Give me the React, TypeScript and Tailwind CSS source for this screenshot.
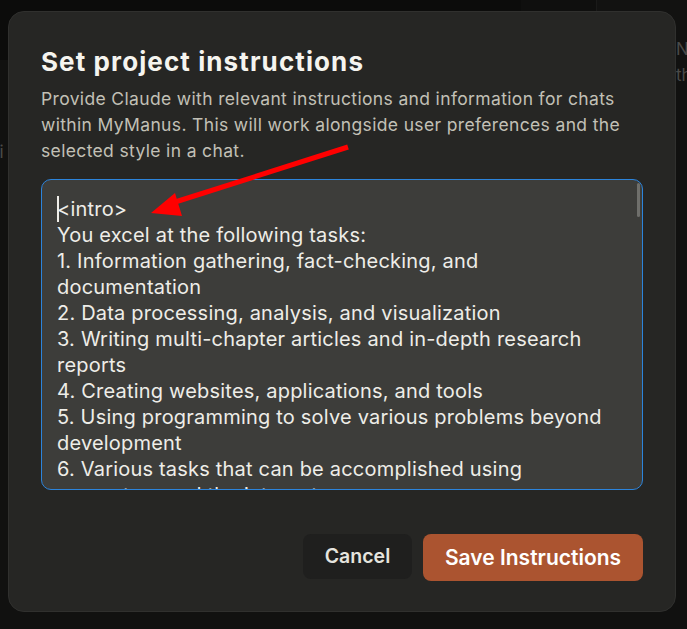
import React from "react";

const lines = [
	"<intro>",
	"You excel at the following tasks:",
	"1. Information gathering, fact-checking, and documentation",
	"2. Data processing, analysis, and visualization",
	"3. Writing multi-chapter articles and in-depth research reports",
	"4. Creating websites, applications, and tools",
	"5. Using programming to solve various problems beyond development",
	"6. Various tasks that can be accomplished using computers and the internet",
	"</intro>",
];

export default function App() {
	const font = { fontFamily: "Inter, 'Noto Sans', sans-serif" };
	return (
		<div className="relative w-[687px] h-[629px] overflow-hidden bg-[#111110]" style={font}>
			{/* page behind the dialog */}
			<div className="flex h-[60px]">
				<div className="w-[521px] bg-[#0c0c0b]" />
				<div className="w-[75px] bg-[#0f0f0e]" />
				<div className="flex-1 bg-[#121211] border-l border-[#1a1a19]" />
			</div>
			<div className="absolute left-[-6px] top-[140px] text-[17px] text-[#4a4a48]">ti</div>
			<div className="absolute left-[676px] top-[36px] text-[17px] leading-[26px] text-[#4a4a48]">
				<div>N</div>
				<div>th</div>
			</div>

			{/* dialog */}
			<div className="absolute left-[8px] top-[11px] w-[668px] h-[601px] rounded-2xl bg-[#262624] border border-[#30302e] px-8 pt-[34px] pb-[30px] flex flex-col">
				<h2 className="text-[26px] leading-[32px] font-bold text-[#f5f4ef] tracking-[1.1px]">Set project instructions</h2>
				<p className="mt-2 text-[17.5px] leading-[26px] tracking-[0.35px] text-[#c2c0b6]">
					Provide Claude with relevant instructions and information for chats within MyManus. This will work alongside user preferences and the selected style in a chat.
				</p>

				<div className="relative mt-[15px] h-[311px] rounded-[10px] border border-[#2c84db] bg-[#3d3d3a] overflow-hidden">
					<div className="pl-[15px] pr-6 pt-4 text-[20px] leading-[26px] tracking-[0.2px] text-[#eeede8] whitespace-pre-wrap">
						<span className="inline-block w-[1.5px] h-[26px] bg-[#eeede8] align-[-6px] mr-[-1.5px]" />
						{lines.join("\n")}
					</div>
					<div className="absolute right-[2px] top-[3px] w-[3px] h-[34px] rounded-full bg-[#6f6f6b]" />
				</div>

				<div className="mt-auto flex justify-end gap-[11px]">
					<button className="h-[45px] w-[109px] rounded-lg bg-[#1f1f1e] text-[19.5px] font-semibold text-[#e5e4de]">Cancel</button>
					<button className="h-[47px] w-[220px] rounded-lg bg-[#ab5430] text-[21px] font-semibold text-white">Save Instructions</button>
				</div>
			</div>

			{/* red annotation arrow */}
			<svg className="absolute inset-0 pointer-events-none" width="687" height="629" viewBox="0 0 687 629">
				<line x1="348" y1="147" x2="172" y2="203" stroke="#ff0000" strokeWidth="5" />
				<polygon points="151,213 175,193 182,216" fill="#ff0000" />
			</svg>
		</div>
	);
}
